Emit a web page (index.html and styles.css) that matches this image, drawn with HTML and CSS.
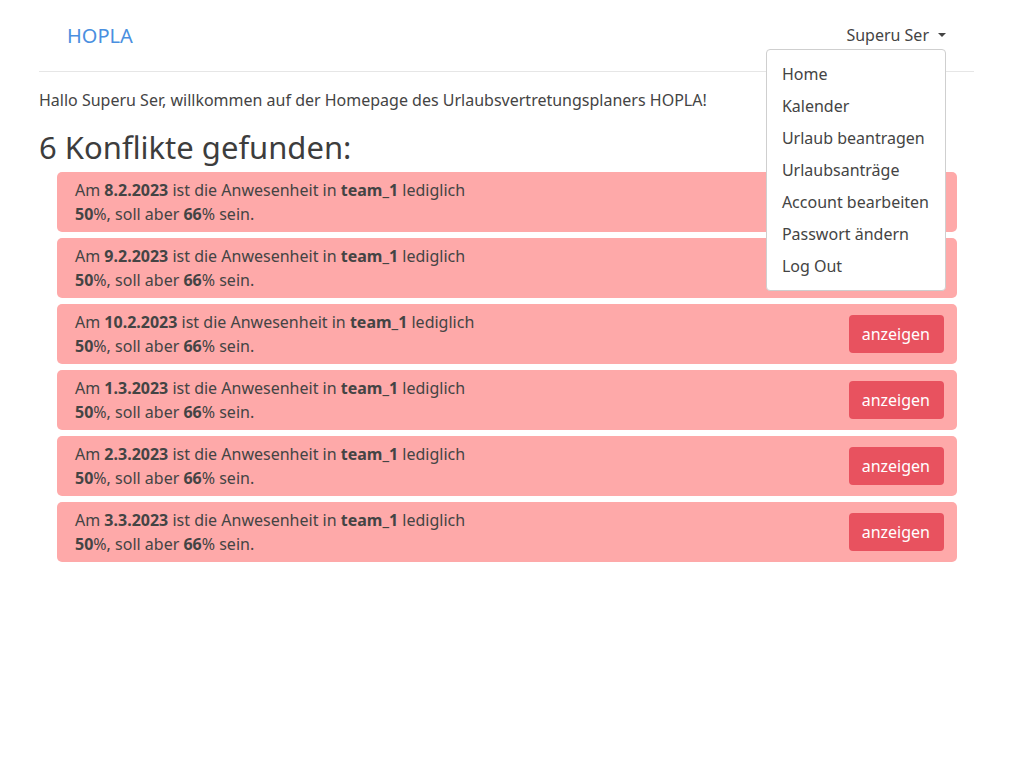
FILE: index.html
```html
<!DOCTYPE html>
<html lang="de">
<head>
<meta charset="utf-8">
<title>HOPLA</title>
<link rel="stylesheet" href="styles.css">
</head>
<body>
<div class="page">
  <nav class="navbar">
    <a class="brand" href="#">HOPLA</a>
    <div class="user-menu">
      <a class="toggle" href="#">Superu Ser <span class="caret"></span></a>
      <ul class="dropdown">
        <li><a href="#">Home</a></li>
        <li><a href="#">Kalender</a></li>
        <li><a href="#">Urlaub beantragen</a></li>
        <li><a href="#">Urlaubsanträge</a></li>
        <li><a href="#">Account bearbeiten</a></li>
        <li><a href="#">Passwort ändern</a></li>
        <li><a href="#">Log Out</a></li>
      </ul>
    </div>
  </nav>
  <p class="welcome">Hallo Superu Ser, willkommen auf der Homepage des Urlaubsvertretungsplaners HOPLA!</p>
  <h2 class="title">6 Konflikte gefunden:</h2>
  <div class="conflicts">
    <div class="alert"><p>Am <b>8.2.2023</b> ist die Anwesenheit in <b>team_1</b> lediglich<br><b>50</b>%, soll aber <b>66</b>% sein.</p><a class="btn" href="#">anzeigen</a></div>
    <div class="alert"><p>Am <b>9.2.2023</b> ist die Anwesenheit in <b>team_1</b> lediglich<br><b>50</b>%, soll aber <b>66</b>% sein.</p><a class="btn" href="#">anzeigen</a></div>
    <div class="alert"><p>Am <b>10.2.2023</b> ist die Anwesenheit in <b>team_1</b> lediglich<br><b>50</b>%, soll aber <b>66</b>% sein.</p><a class="btn" href="#">anzeigen</a></div>
    <div class="alert"><p>Am <b>1.3.2023</b> ist die Anwesenheit in <b>team_1</b> lediglich<br><b>50</b>%, soll aber <b>66</b>% sein.</p><a class="btn" href="#">anzeigen</a></div>
    <div class="alert"><p>Am <b>2.3.2023</b> ist die Anwesenheit in <b>team_1</b> lediglich<br><b>50</b>%, soll aber <b>66</b>% sein.</p><a class="btn" href="#">anzeigen</a></div>
    <div class="alert"><p>Am <b>3.3.2023</b> ist die Anwesenheit in <b>team_1</b> lediglich<br><b>50</b>%, soll aber <b>66</b>% sein.</p><a class="btn" href="#">anzeigen</a></div>
  </div>
</div>
</body>
</html>
```
FILE: styles.css
```css
* { box-sizing: border-box; }
html, body { margin: 0; padding: 0; background: #fff; }
body {
  font-family: "Noto Sans", "Open Sans", sans-serif;
  font-size: 16px;
  line-height: 24px;
  color: #444;
}
a { text-decoration: none; }
.page { padding: 0 38px 0 39px; }
.navbar {
  position: relative;
  display: flex;
  justify-content: space-between;
  align-items: center;
  height: 72px;
  padding: 0 28px;
  border-bottom: 1px solid #e6e6e6;
}
.brand { color: #4a8fe0; font-size: 20px; line-height: 28px; }
.toggle { color: #444; display: flex; align-items: center; gap: 9px; margin-top: -2px; padding-left: 1px; }
.caret {
  display: inline-block;
  width: 0; height: 0;
  border-top: 4px solid #444;
  border-left: 4px solid transparent;
  border-right: 4px solid transparent;
}
.dropdown {
  position: absolute;
  top: 49px;
  right: 28px;
  min-width: 180px;
  margin: 0;
  padding: 8px 0;
  list-style: none;
  background: #fff;
  border: 1px solid #cfcfcf;
  border-radius: 4px;
  z-index: 10;
}
.dropdown a { display: block; padding: 4px 16px 4px 15px; color: #444; line-height: 24px; white-space: nowrap; }
.welcome { margin: 16px 0 0; }
.title { margin: 15px 0 5px; font-size: 31px; line-height: 40px; font-weight: 400; color: #3d3d3d; }
.conflicts { padding: 0 17px 0 18px; display: flex; flex-direction: column; gap: 6px; }
.alert {
  display: flex;
  justify-content: space-between;
  align-items: center;
  min-height: 60px;
  padding: 6px 13px 6px 18px;
  background: #fea9a9;
  border-radius: 5px;
}
.alert p { margin: 0; }
.alert b { font-weight: 700; }
.btn {
  display: inline-block;
  background: #e8525f;
  color: #fff;
  padding: 7px 14px 7px 13px;
  border-radius: 4px;
  line-height: 24px;
}
```
